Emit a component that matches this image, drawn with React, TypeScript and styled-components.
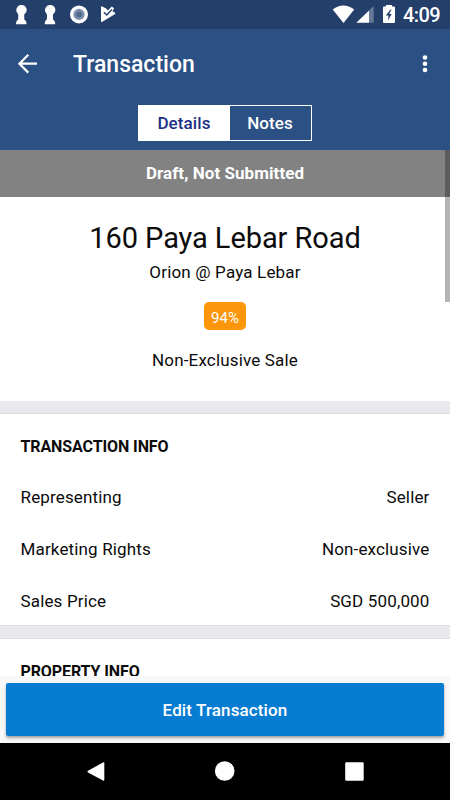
import React from 'react';
import styled, { createGlobalStyle } from 'styled-components';

const GlobalStyle = createGlobalStyle`
  * { box-sizing: border-box; }
  body { margin: 0; background: #fff; font-family: Roboto, sans-serif; color: #0b0b0b; }
  h1, h2, p { margin: 0; }
  button { font: inherit; border: 0; padding: 0; background: none; color: inherit; }
  svg { display: block; flex: none; }
`;

const Screen = styled.div`
  width: 450px;
  height: 800px;
  display: flex;
  flex-direction: column;
  overflow: hidden;
`;

const StatusBar = styled.div`
  height: 29px;
  flex: none;
  display: flex;
  justify-content: space-between;
  background: #243f6a;
  color: #fff;
`;

const StatusGroup = styled.div`
  display: flex;
`;

const Clock = styled.span`
  font-size: 20px;
  font-weight: 500;
  line-height: 31px;
  width: 47px;
  letter-spacing: -0.6px;
  white-space: nowrap;
`;

const Header = styled.header`
  height: 121px;
  flex: none;
  background: #2b5083;
  color: #fff;
`;

const Toolbar = styled.div`
  height: 76px;
  display: flex;
  align-items: flex-start;
`;

const IconButton = styled.button<{ $width: number }>`
  width: ${(p) => p.$width}px;
  height: 70px;
`;

const Title = styled.h1`
  flex: 1;
  font-size: 23px;
  font-weight: 500;
  line-height: 71px;
  letter-spacing: 0;
`;

const Segments = styled.div`
  width: 174px;
  height: 36px;
  margin: 0 auto;
  display: flex;
  border: 1px solid #fff;
`;

const Segment = styled.button<{ $active?: boolean }>`
  width: ${(p) => (p.$active ? 91 : 81)}px;
  padding-right: 1px;
  font-size: 17px;
  font-weight: 500;
  line-height: 35px;
  letter-spacing: 0.1px;
  background: ${(p) => (p.$active ? '#fff' : '#2b5083')};
  color: ${(p) => (p.$active ? '#1c2f83' : '#fff')};
`;

const Content = styled.main`
  height: 526px;
  flex: none;
  overflow: hidden;
  position: relative;
  background: #e9e8ee;
`;

const ScrollThumb = styled.div`
  position: absolute;
  top: 0;
  right: 0;
  width: 5px;
  height: 152px;
  background: rgba(0, 0, 0, 0.29);
`;

const Banner = styled.div`
  height: 47px;
  background: #828282;
  color: #fff;
  font-size: 17px;
  font-weight: 700;
  line-height: 47px;
  letter-spacing: 0.06px;
  text-align: center;
`;

const Summary = styled.section`
  height: 204px;
  background: #fff;
  display: flex;
  flex-direction: column;
  align-items: center;
  padding-top: 22px;
`;

const Address = styled.h2`
  font-size: 29px;
  font-weight: 400;
  line-height: 39px;
  letter-spacing: -0.08px;
`;

const Caption = styled.p`
  font-size: 17px;
  line-height: 28px;
  letter-spacing: 0.17px;
`;

const Badge = styled.span`
  width: 42px;
  height: 28px;
  margin: 16px 0;
  border-radius: 5px;
  background: #fb960a;
  color: #fff;
  font-size: 15px;
  line-height: 32px;
  text-align: center;
`;

const Card = styled.section`
  margin-top: 12px;
  height: 213px;
  background: #fff;
  border-top: 1px solid #dddde1;
  border-bottom: 1px solid #dddde1;
  padding: 6px 20.5px 0;
`;

const CardTitle = styled.h2`
  height: 52px;
  font-size: 16px;
  font-weight: 700;
  line-height: 53px;
  letter-spacing: -0.1px;
`;

const Row = styled.div`
  height: 52px;
  display: flex;
  justify-content: space-between;
  font-size: 17px;
  line-height: 51px;
  letter-spacing: 0.15px;
`;

const Footer = styled.footer`
  height: 67px;
  flex: none;
  padding: 7px 6px;
  background: #f8f8f8;
`;

const PrimaryButton = styled.button`
  width: 438px;
  height: 53px;
  display: block;
  border-radius: 2px;
  background: #087cd1;
  color: #fff;
  font-size: 17px;
  font-weight: 500;
  line-height: 54px;
  letter-spacing: 0.12px;
  box-shadow: 0 2px 3px rgba(0, 0, 0, 0.35);
`;

const NavBar = styled.nav`
  height: 57px;
  flex: none;
  background: #000;
`;

const KEYHOLE = 'M21.5 5a5 5 0 0 1 3.6 8.6 l-.9 1 L24.3 19.4 q2.2 1 2.2 4.8 H16 q0-3.8 2.2-4.8 L18.3 14.4 l-.6-1 A5 5 0 0 1 21.5 5z';

const details = [
  ['Representing', 'Seller'],
  ['Marketing Rights', 'Non-exclusive'],
  ['Sales Price', 'SGD 500,000'],
];

const Notifications = () => (
  <svg width="130" height="29" viewBox="0 0 130 29" fill="#fff">
    <path d={KEYHOLE} />
    <path transform="translate(28.7 0)" d={KEYHOLE} />
    <circle cx="79" cy="14.4" r="9" />
    <circle cx="79" cy="14.4" r="5.6" fill="#7c8fac" />
    <circle cx="79" cy="14.4" r="3" fill="#526b8f" />
    <path d="M101 7q0-1.2 1.2-.6l4 2.2 1.6 1.8 4-3.9 2.2 1.7-1.5 3.1 2.3 1.2q1.3.9 0 1.8L102.300 21.800q-1.300.7-1.300-.7z" />
    <path d="M103.900 12.300l2.800 2.800 5.200-5.500" fill="none" stroke="#243f6a" strokeWidth="1.400" />
  </svg>
);

const DeviceStatus = () => (
  <svg width="73" height="29" viewBox="330 0 73 29" fill="#fff">
    <path d="M332.700 9.600Q343.400 1.200 354.200 9.600L343.500 23z" />
    <path d="M369 10.500L373.700 6v16.800H369z" opacity=".3" />
    <path d="M356.300 22.800L369 10.500v12.300z" />
    <path d="M386 6.500V5h6v1.500h2q1 0 1 1v14.700q0 .8-1 .8h-10q-1 0-1-.8V7.500q0-1 1-1z" />
    <path d="M390.500 9.500l-4.700 6h2.800l-.8 5 4-6.600h-2.500l2.200-4.400z" fill="#243f6a" />
  </svg>
);

export default function App() {
  return (
    <Screen>
      <GlobalStyle />
      <StatusBar>
        <StatusGroup>
          <Notifications />
        </StatusGroup>
        <StatusGroup>
          <DeviceStatus />
          <Clock>4:09</Clock>
        </StatusGroup>
      </StatusBar>
      <Header>
        <Toolbar>
          <IconButton $width={73} aria-label="Back">
            <svg width="50" height="70" viewBox="0 29 50 70" fill="none" stroke="#fff" strokeWidth="2.200">
              <path d="M28.300 54.800L19.400 63.700L28.300 72.600M19.400 63.700H37" />
            </svg>
          </IconButton>
          <Title>Transaction</Title>
          <IconButton $width={50} aria-label="More options">
            <svg width="50" height="70" viewBox="400 29 50 70" fill="#fff">
              <circle cx="425" cy="57.500" r="2.300" />
              <circle cx="425" cy="63.700" r="2.300" />
              <circle cx="425" cy="70" r="2.300" />
            </svg>
          </IconButton>
        </Toolbar>
        <Segments>
          <Segment $active>Details</Segment>
          <Segment>Notes</Segment>
        </Segments>
      </Header>
      <Content>
        <Banner>Draft, Not Submitted</Banner>
        <Summary>
          <Address>160 Paya Lebar Road</Address>
          <Caption>Orion @ Paya Lebar</Caption>
          <Badge>94%</Badge>
          <Caption>Non-Exclusive Sale</Caption>
        </Summary>
        <Card>
          <CardTitle>TRANSACTION INFO</CardTitle>
          {details.map(([label, value]) => (
            <Row key={label}>
              <span>{label}</span>
              <span>{value}</span>
            </Row>
          ))}
        </Card>
        <Card>
          <CardTitle>PROPERTY INFO</CardTitle>
        </Card>
        <ScrollThumb />
      </Content>
      <Footer>
        <PrimaryButton>Edit Transaction</PrimaryButton>
      </Footer>
      <NavBar>
        <svg width="450" height="57" viewBox="0 743 450 57" fill="#fff">
          <path d="M103 762.500q1.300-.7 1.300.8v16.500q0 1.500-1.300.8l-15-8.200q-1.100-.8 0-1.600z" />
          <circle cx="224.700" cy="771" r="9.800" />
          <rect x="345.200" y="762.200" width="18.500" height="18.600" rx="1.200" />
        </svg>
      </NavBar>
    </Screen>
  );
}
